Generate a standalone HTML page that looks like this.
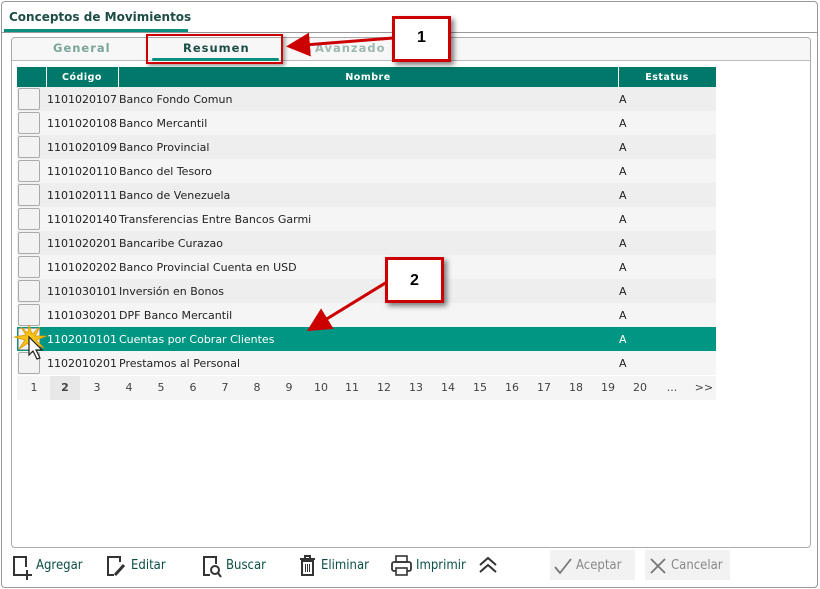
<!DOCTYPE html>
<html><head><meta charset="utf-8"><style>
*{box-sizing:border-box;margin:0;padding:0}
body{width:820px;height:589px;background:#fff;font-family:"DejaVu Sans","Liberation Sans",sans-serif;position:relative;overflow:hidden}
.abs{position:absolute}
.outer{left:1px;top:1px;width:817px;height:587px;border:1px solid #999;border-radius:4px;background:#fff}
.title{left:9px;top:10px;font-size:12px;font-weight:bold;color:#1d4e45}
.tline{left:4px;top:29px;width:184px;height:3px;background:#0a8f7f}
.hline{left:1px;top:32px;width:817px;height:1px;background:#999}
.panel{left:11px;top:37px;width:800px;height:511px;border:1px solid #aaa;border-radius:4px;background:#fff;overflow:hidden}
.tabbar{left:0;top:0;width:100%;height:23px;background:#f7f7f7;border-bottom:1px solid #bbb}
.tab{font-size:11.5px;font-weight:bold;letter-spacing:1px;top:3px}
table{position:absolute;left:17px;top:67px;border-collapse:collapse;font-size:11px;width:699px;table-layout:fixed}
th{background:#00786a;color:#fff;font-size:9.5px;height:20px;border-right:1px solid #fff;letter-spacing:.5px}
td{height:24px;padding:0 1px;color:#222;white-space:nowrap;overflow:hidden}
tr.o td{background:#eee}tr.e td{background:#f5f5f5}
tr.s td{background:#009684;color:#fff}
.cb{width:22px;height:22px;border:1px solid #aaa;border-radius:2px;background:#f2f2f2;margin-left:1px}
.pg{left:17px;top:376px;width:699px;height:24px;background:#f5f5f5;font-size:11px;color:#444}
.pg span{position:absolute;top:5px;width:30px;text-align:center}
.bar{top:558px;font-family:"DejaVu Sans Condensed","Liberation Sans Narrow",sans-serif;font-size:13px;color:#0c4f45}
.btn{top:550px;height:30px;background:#f2f2f2;color:#888;font-size:13px;font-family:"DejaVu Sans Condensed",sans-serif;padding:8px 0 0 26px}
.call{background:#fff;border:3px solid #c00;font-weight:bold;font-size:16px;text-align:center;box-shadow:3px 3px 5px rgba(0,0,0,.5);font-family:"Liberation Sans",sans-serif}
</style></head><body>
<div class="abs outer"></div>
<div class="abs title">Conceptos de Movimientos</div>
<div class="abs tline"></div>
<div class="abs hline"></div>
<div class="abs panel">
 <div class="abs tabbar"></div>
 <div class="abs tab" style="left:41px;color:#7aa59b">General</div>
 <div class="abs tab" style="left:171px;color:#1d4e45">Resumen</div>
 <div class="abs" style="left:140px;top:20px;width:127px;height:3px;background:#0a8f7f;border-radius:2px"></div>
 <div class="abs tab" style="left:303px;color:#9fb7b1">Avanzado</div>
</div>
<div class="abs" style="left:146px;top:34px;width:137px;height:30px;border:2px solid #c00;box-shadow:2px 2px 4px rgba(0,0,0,.4)"></div>
<table>
<colgroup><col style="width:29px"><col style="width:72px"><col style="width:500px"><col style="width:98px"></colgroup>
<tr><th></th><th>Código</th><th>Nombre</th><th>Estatus</th></tr>
<tr class="o"><td style="padding:0"><div class="cb"></div></td><td>1101020107</td><td>Banco Fondo Comun</td><td>A</td></tr>
<tr class="e"><td style="padding:0"><div class="cb"></div></td><td>1101020108</td><td>Banco Mercantil</td><td>A</td></tr>
<tr class="o"><td style="padding:0"><div class="cb"></div></td><td>1101020109</td><td>Banco Provincial</td><td>A</td></tr>
<tr class="e"><td style="padding:0"><div class="cb"></div></td><td>1101020110</td><td>Banco del Tesoro</td><td>A</td></tr>
<tr class="o"><td style="padding:0"><div class="cb"></div></td><td>1101020111</td><td>Banco de Venezuela</td><td>A</td></tr>
<tr class="e"><td style="padding:0"><div class="cb"></div></td><td>1101020140</td><td>Transferencias Entre Bancos Garmi</td><td>A</td></tr>
<tr class="o"><td style="padding:0"><div class="cb"></div></td><td>1101020201</td><td>Bancaribe Curazao</td><td>A</td></tr>
<tr class="e"><td style="padding:0"><div class="cb"></div></td><td>1101020202</td><td>Banco Provincial Cuenta en USD</td><td>A</td></tr>
<tr class="o"><td style="padding:0"><div class="cb"></div></td><td>1101030101</td><td>Inversión en Bonos</td><td>A</td></tr>
<tr class="e"><td style="padding:0"><div class="cb"></div></td><td>1101030201</td><td>DPF Banco Mercantil</td><td>A</td></tr>
<tr class="s"><td style="padding:0"><div class="cb"></div></td><td>1102010101</td><td>Cuentas por Cobrar Clientes</td><td>A</td></tr>
<tr class="e"><td style="padding:0"><div class="cb"></div></td><td>1102010201</td><td>Prestamos al Personal</td><td>A</td></tr>
</table>
<svg class="abs" style="left:14px;top:323px" width="36" height="42" viewBox="0 0 36 42">
<polygon points="15,2 18,11 26,4 21,13 33,13 22,17 30,25 19,20 17,30 14,20 5,26 11,17 0,14 12,12 7,4 14,10" fill="#f7c21a" stroke="#d89a00" stroke-width=".8"/>
<path d="M15,14 L15,32 L19,28 L23,36 L26,35 L22,27 L28,27 Z" fill="#fff" stroke="#222" stroke-width="1.2"/>
</svg>
<div class="abs pg">
<span style="left:2px">1</span><span style="left:33px;top:0;height:24px;padding-top:5px;background:#e8e8e8;font-weight:bold">2</span>
<span style="left:65px">3</span><span style="left:97px">4</span><span style="left:129px">5</span><span style="left:161px">6</span><span style="left:193px">7</span><span style="left:225px">8</span><span style="left:257px">9</span><span style="left:289px">10</span><span style="left:320px">11</span><span style="left:352px">12</span><span style="left:384px">13</span><span style="left:416px">14</span><span style="left:448px">15</span><span style="left:480px">16</span><span style="left:512px">17</span><span style="left:544px">18</span><span style="left:576px">19</span><span style="left:608px">20</span><span style="left:640px">...</span><span style="left:672px">&gt;&gt;</span>
</div>
<svg class="abs" style="left:0;top:0" width="820" height="589">
<defs><marker id="ah" markerWidth="8" markerHeight="8" refX="6" refY="4" orient="auto"><path d="M0,0 L8,4 L0,8 Z" fill="#c00"/></marker></defs>
<line x1="393" y1="38" x2="292" y2="46" stroke="#c00" stroke-width="3" marker-end="url(#ah)"/>
<line x1="387" y1="282" x2="312" y2="328" stroke="#c00" stroke-width="3" marker-end="url(#ah)"/>
</svg>
<div class="abs call" style="left:392px;top:16px;width:59px;height:46px;padding-top:10px">1</div>
<div class="abs call" style="left:385px;top:257px;width:59px;height:46px;padding-top:12px">2</div>
<svg class="abs" style="left:12px;top:555px" width="22" height="26"><path d="M10,20 H2 V2 H14 V12" fill="none" stroke="#333" stroke-width="2"/><path d="M15,15 V25 M10,20 H20" stroke="#333" stroke-width="2"/></svg>
<div class="abs bar" style="left:36px">Agregar</div>
<svg class="abs" style="left:106px;top:555px" width="22" height="24"><path d="M8,20 H2 V2 H14 V7" fill="none" stroke="#333" stroke-width="2"/><path d="M9,20 L18,10" stroke="#333" stroke-width="3"/></svg>
<div class="abs bar" style="left:131px">Editar</div>
<svg class="abs" style="left:202px;top:555px" width="22" height="24"><path d="M8,20 H2 V2 H14 V9" fill="none" stroke="#333" stroke-width="2"/><circle cx="13" cy="15" r="4" fill="none" stroke="#333" stroke-width="2"/><path d="M16,18 L19,22" stroke="#333" stroke-width="2"/></svg>
<div class="abs bar" style="left:226px">Buscar</div>
<svg class="abs" style="left:298px;top:555px" width="20" height="22"><path d="M2,4 H17 M7,4 V1 H12 V4" fill="none" stroke="#333" stroke-width="2"/><rect x="4" y="6" width="11" height="14" fill="none" stroke="#333" stroke-width="2"/><path d="M7.5,9 V17 M9.5,9 V17 M11.5,9 V17" stroke="#333"/></svg>
<div class="abs bar" style="left:321px">Eliminar</div>
<svg class="abs" style="left:391px;top:555px" width="22" height="22"><rect x="5" y="1" width="11" height="6" fill="none" stroke="#333" stroke-width="1.6"/><rect x="1" y="7" width="19" height="9" rx="2" fill="none" stroke="#333" stroke-width="1.8"/><rect x="5" y="13" width="11" height="7" fill="#fff" stroke="#333" stroke-width="1.6"/></svg>
<div class="abs bar" style="left:416px">Imprimir</div>
<svg class="abs" style="left:478px;top:556px" width="20" height="18"><path d="M2,9 L10,2 L18,9 M2,16 L10,9 L18,16" fill="none" stroke="#333" stroke-width="2"/></svg>
<div class="abs btn" style="left:550px;width:85px">Aceptar</div>
<svg class="abs" style="left:553px;top:557px" width="20" height="18"><path d="M2,10 L7,16 L18,2" fill="none" stroke="#777" stroke-width="1.8"/></svg>
<div class="abs btn" style="left:645px;width:85px">Cancelar</div>
<svg class="abs" style="left:649px;top:557px" width="18" height="18"><path d="M2,2 L16,16 M16,2 L2,16" stroke="#777" stroke-width="1.8"/></svg>
</body></html>
